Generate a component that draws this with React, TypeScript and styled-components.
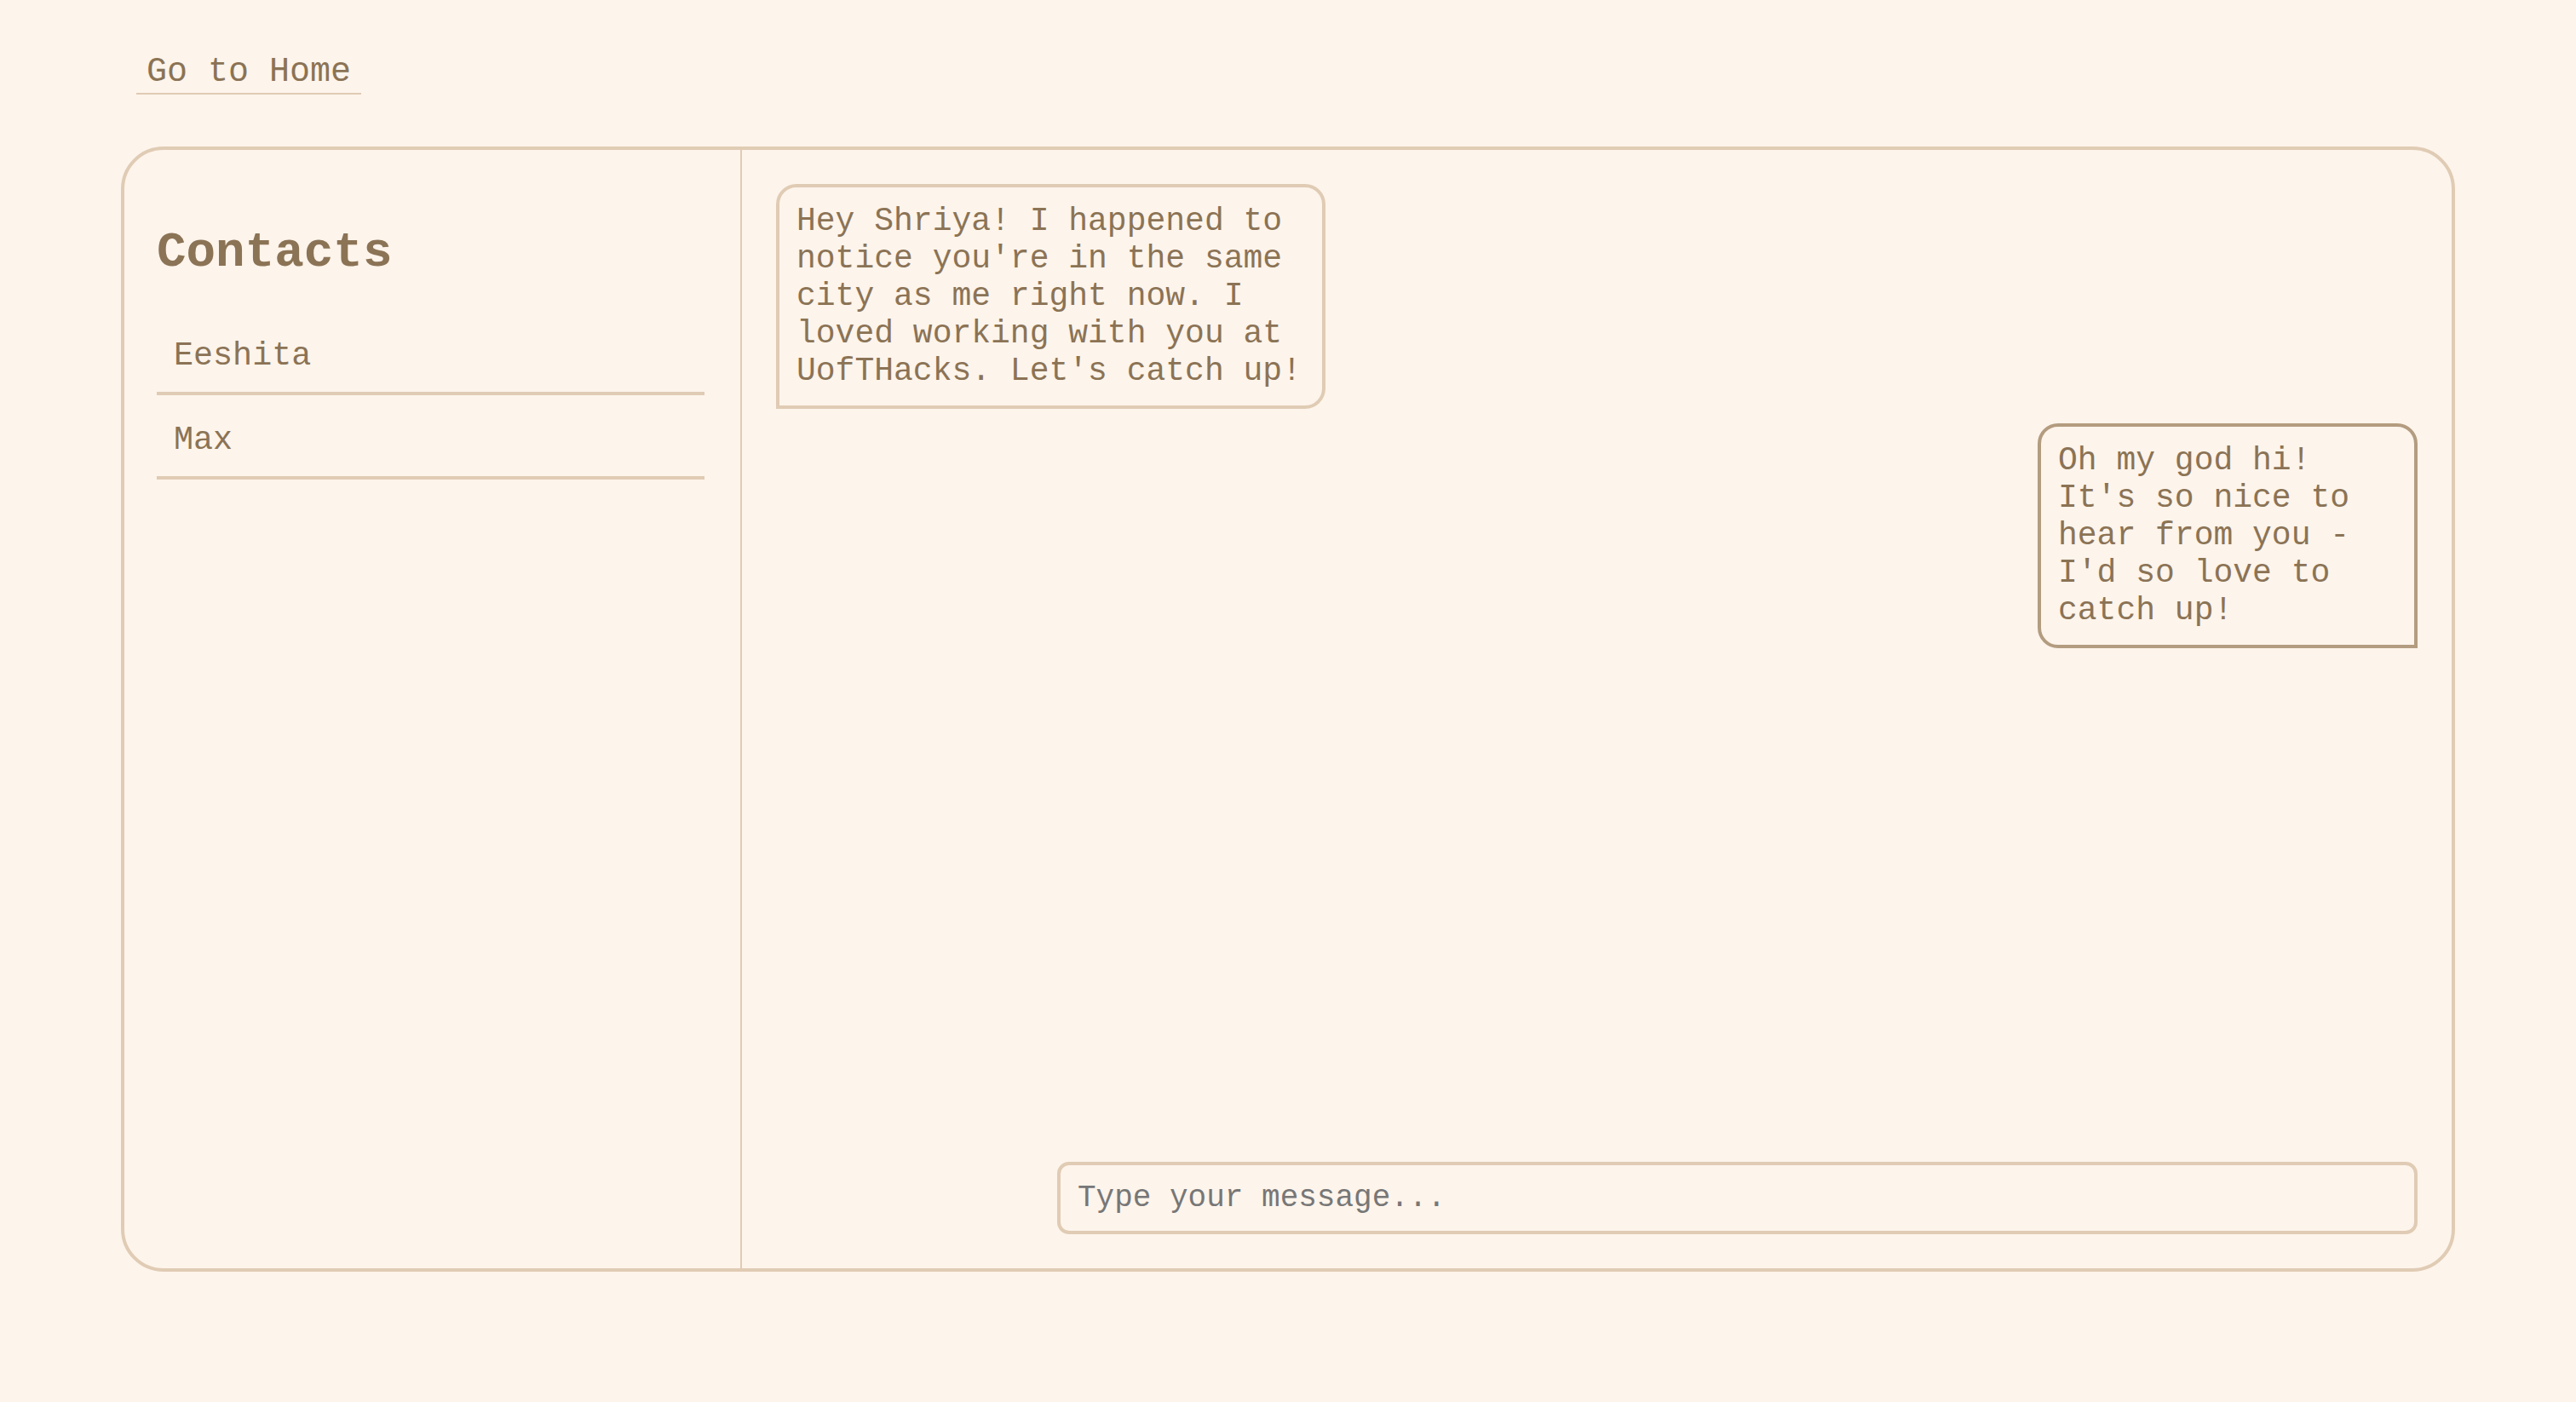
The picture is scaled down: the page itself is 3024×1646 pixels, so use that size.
import React from 'react';
import styled, { createGlobalStyle, css } from 'styled-components';

const GlobalStyle = createGlobalStyle`
  html, body {
    margin: 0;
    padding: 0;
    background: #fdf4eb;
  }
  body {
    font-family: "Liberation Mono", "Courier New", monospace;
    color: #8b7355;
  }
  * {
    box-sizing: border-box;
  }
`;

const Page = styled.div`
  min-height: 1646px;
  padding: 62px 142px 0 142px;
  background: #fdf4eb;
`;

const Header = styled.div`
  padding-left: 18px;
  margin-bottom: 61px;
`;

const HomeLink = styled.a`
  display: inline-block;
  padding: 0 12px 2px 12px;
  font-size: 40px;
  color: #8b7355;
  text-decoration: none;
  border-bottom: 2px solid #e0cbb4;
  cursor: pointer;
`;

const ChatContainer = styled.div`
  display: flex;
  height: 1321px;
  border: 4px solid #e0cbb4;
  border-radius: 50px;
  overflow: hidden;
`;

const Sidebar = styled.aside`
  width: 725px;
  flex-shrink: 0;
  padding: 40px 42px 40px 38px;
  border-right: 2px solid #e0cbb4;
`;

const SidebarTitle = styled.h2`
  margin: 0.83em 0 0.8em 0;
  font-size: 57.6px;
  font-weight: bold;
  color: #8b7355;
`;

const ContactList = styled.ul`
  list-style: none;
  margin: 0;
  padding: 0;
`;

const ContactItem = styled.li`
  padding: 21px 20px 20px 20px;
  margin-bottom: 10px;
  font-size: 38.4px;
  border-bottom: 4px solid #e0cbb4;
  cursor: pointer;
`;

const ChatArea = styled.section`
  flex: 1;
  display: flex;
  flex-direction: column;
  padding: 40px;
`;

const MessageList = styled.div`
  flex: 1;
  display: flex;
  flex-direction: column;
  gap: 17px;
`;

const Bubble = styled.div<{ $own?: boolean }>`
  padding: 18px 20px;
  font-size: 38px;
  line-height: 44px;
  color: #8b7355;
  ${({ $own = false }) =>
    $own
      ? css`
          align-self: flex-end;
          width: 446px;
          border: 4px solid #b39c80;
          border-radius: 24px 24px 0 24px;
        `
      : css`
          align-self: flex-start;
          max-width: 645px;
          border: 4px solid #e0cbb4;
          border-radius: 24px 24px 24px 0;
        `}
`;

const InputRow = styled.form`
  display: flex;
  justify-content: flex-end;
`;

const MessageInput = styled.input`
  width: 1597px;
  padding: 18px 20px;
  font-family: "Liberation Mono", "Courier New", monospace;
  font-size: 36px;
  color: #8b7355;
  background: transparent;
  border: 4px solid #e0cbb4;
  border-radius: 14px;
  outline: none;
  &::placeholder {
    color: #777777;
  }
`;

const contacts = ['Eeshita', 'Max'];

const messages = [
  {
    id: 1,
    own: false,
    text: "Hey Shriya! I happened to notice you're in the same city as me right now. I loved working with you at UofTHacks. Let's catch up!",
  },
  {
    id: 2,
    own: true,
    text: "Oh my god hi! It's so nice to hear from you - I'd so love to catch up!",
  },
];

const App = () => {
  return (
    <>
      <GlobalStyle />
      <Page>
        <Header>
          <HomeLink>Go to Home</HomeLink>
        </Header>
        <ChatContainer>
          <Sidebar>
            <SidebarTitle>Contacts</SidebarTitle>
            <ContactList>
              {contacts.map((name) => (
                <ContactItem key={name}>{name}</ContactItem>
              ))}
            </ContactList>
          </Sidebar>
          <ChatArea>
            <MessageList>
              {messages.map((m) => (
                <Bubble key={m.id} $own={m.own}>
                  {m.text}
                </Bubble>
              ))}
            </MessageList>
            <InputRow onSubmit={(e) => e.preventDefault()}>
              <MessageInput placeholder='Type your message...' />
            </InputRow>
          </ChatArea>
        </ChatContainer>
      </Page>
    </>
  );
};

export default App;
